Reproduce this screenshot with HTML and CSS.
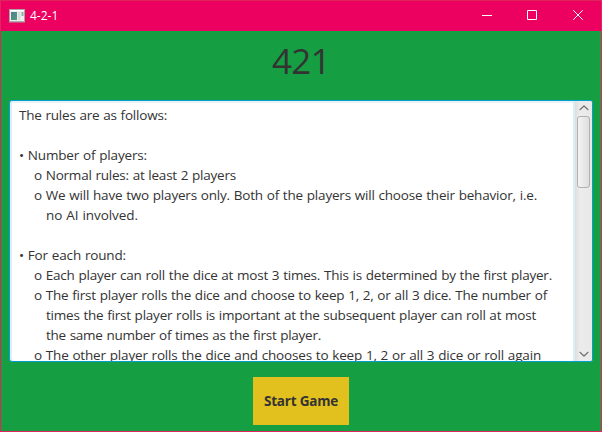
FILE: index.html
```html
<!DOCTYPE html>
<html lang="en">
<head>
<meta charset="utf-8">
<title>4-2-1</title>
<link rel="stylesheet" href="styles.css">
</head>
<body>
<div class="window">
  <header class="titlebar">
    <svg class="app-icon" width="16" height="14" viewBox="0 0 16 14">
      <defs><linearGradient id="pane" x1="0" y1="0" x2="1" y2="1"><stop offset="0" stop-color="#4b8196"/><stop offset="1" stop-color="#4f9c78"/></linearGradient></defs>
      <rect x=".5" y=".5" width="15" height="12.5" fill="#eee" stroke="#aaa69f"/>
      <path d="M1 1.5h14" stroke="#fff"/>
      <rect x="2" y="3" width="6" height="8" fill="url(#pane)"/>
      <rect x="9" y="3" width="2.5" height="8" fill="#d5dddd"/>
      <rect x="12.5" y="3" width="2" height="4" fill="#80b59d"/>
      <path d="M1 12.5h14" stroke="#aaa"/>
    </svg>
    <span class="caption">4-2-1</span>
    <div class="controls">
      <svg width="12" height="12" viewBox="0 0 12 12"><path d="M1 5.5h10"/></svg>
      <svg width="12" height="12" viewBox="0 0 12 12"><path d="M1.5 .5h9v9h-9z"/></svg>
      <svg class="close" width="12" height="12" viewBox="0 0 12 12"><path d="M1.2 .2l9.6 9.6M10.8 .2l-9.6 9.6"/></svg>
    </div>
  </header>
  <main class="content">
    <h1 class="heading"><span data-width="58">421</span></h1>
    <section class="rules">
      <div class="text">
        <p><span data-width="148">The rules are as follows:</span></p>
        <p></p>
        <p><span data-width="128">• Number of players:</span></p>
        <p class="item"><span data-width="202">o Normal rules: at least 2 players</span></p>
        <p class="item"><span data-width="503">o We will have two players only. Both of the players will choose their behavior, i.e.</span></p>
        <p class="cont"><span data-width="92">no AI involved.</span></p>
        <p></p>
        <p><span data-width="107">• For each round:</span></p>
        <p class="item"><span data-width="518">o Each player can roll the dice at most 3 times. This is determined by the first player.</span></p>
        <p class="item"><span data-width="513">o The first player rolls the dice and choose to keep 1, 2, or all 3 dice. The number of</span></p>
        <p class="cont"><span data-width="490">times the first player rolls is important at the subsequent player can roll at most</span></p>
        <p class="cont"><span data-width="275">the same number of times as the first player.</span></p>
        <p class="item"><span data-width="507">o The other player rolls the dice and chooses to keep 1, 2 or all 3 dice or roll again</span></p>
      </div>
      <div class="scrollbar">
        <svg width="10" height="6" viewBox="0 0 10 6"><path d="M.7 5L5 1l4.3 4"/></svg>
        <div class="thumb"></div>
        <svg class="down" width="10" height="6" viewBox="0 0 10 6"><path d="M.7 1L5 5l4.3-4"/></svg>
      </div>
    </section>
    <button class="start"><span data-width="74">Start Game</span></button>
  </main>
</div>
<script src="fit.js"></script>
</body>
</html>
```
FILE: fit.js
```js
// Track each line so that it fills its set width.
document.querySelectorAll('[data-width]').forEach(function (el) {
  var gap = Number(el.dataset.width) - el.getBoundingClientRect().width;
  el.style.letterSpacing = gap / el.textContent.length + 'px';
});
```
FILE: styles.css
```css
* { box-sizing: border-box; }
body { margin: 0; font-family: "Open Sans", "Noto Sans", sans-serif; color: #333; }
.window {
  width: 602px; height: 432px; overflow: hidden;
  border: 1px solid #e0245e;
  background: #159f42;
}
.titlebar { height: 30px; display: flex; align-items: center; padding-left: 8px; background: #ec0060; color: #fff; }
.app-icon { display: block; margin-top: -1px; }
.caption { margin-left: 5px; font-size: 12px; line-height: 16px; }
.controls { margin-left: auto; padding-right: 17px; display: flex; gap: 33px; }
.controls .close { margin-left: 1px; }
.controls svg, .scrollbar svg { display: block; fill: none; }
.controls svg { stroke: #fff; }
.content { height: 400px; display: flex; flex-direction: column; align-items: center; }
.heading { margin: 5px 0 0; height: 50px; font-size: 35px; line-height: 50px; font-weight: 400; }
.rules {
  width: 584px; height: 262px; margin-top: 14px; display: flex; overflow: hidden;
  border: 1px solid #039ed3; border-radius: 3px; background: #fff;
  box-shadow: inset 0 2px 1px #e9f1f5, inset 2px 0 1px #d9eff8;
}
.text { width: 563px; padding: 4px 0 0 9px; font-size: 13.5px; word-spacing: 0.5px; }
.text p { margin: 0; height: 20px; line-height: 20px; white-space: nowrap; }
.text .item { padding-left: 15px; }
.text .cont { padding-left: 27px; }
.scrollbar {
  flex: 1; display: flex; flex-direction: column; align-items: center; padding: 4px 0;
  border-left: 2px solid #d8eff7;
  background: linear-gradient(90deg, #dedede, #ececec 30%, #e9e9e9);
}
.scrollbar svg { stroke: #777; stroke-width: 1.3; }
.scrollbar .down { margin-top: auto; }
.thumb {
  width: 13px; height: 72px; margin-top: 5px;
  border: 1px solid #b0b0b0; border-radius: 3px;
  background: linear-gradient(90deg, #f4f4f4, #dedede);
}
.start {
  width: 96px; height: 48px; margin-top: 15px; padding: 0; border: 0;
  background: #e2c01e; color: #333; font: 700 13.5px/48px "Open Sans", sans-serif;
}
```
